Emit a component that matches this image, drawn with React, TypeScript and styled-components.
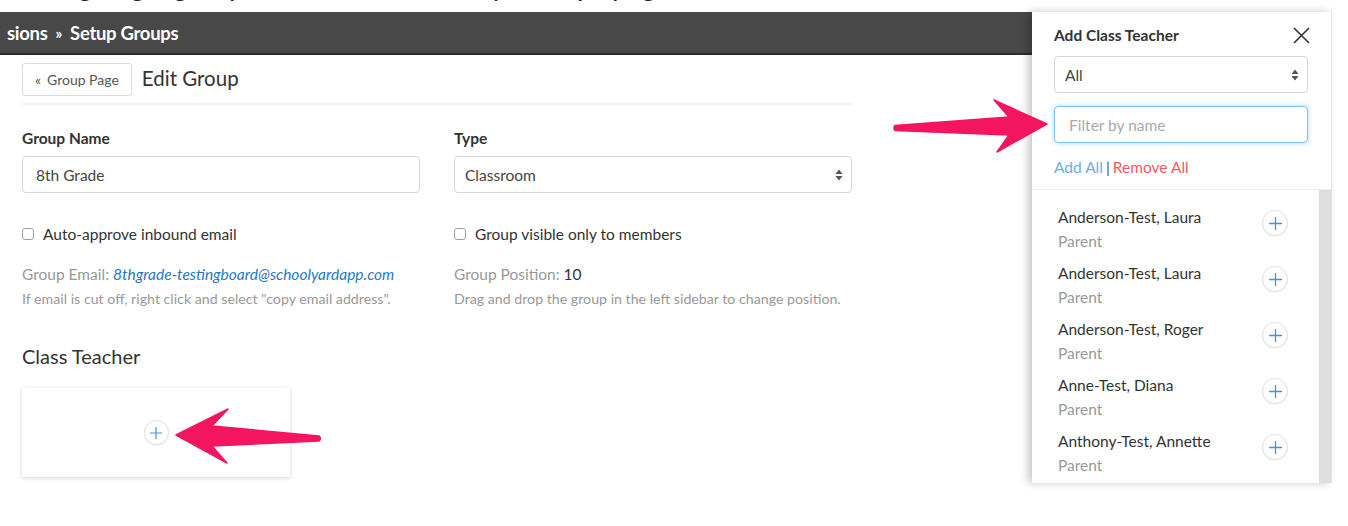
import * as React from "react";
import styled, { createGlobalStyle } from "styled-components";

const GlobalStyle = createGlobalStyle`
    html, body { margin: 0; padding: 0; background: #fff; }
    body { font-family: Lato, "Open Sans", "Liberation Sans", sans-serif; color: #333; }
    * { box-sizing: border-box; }
`;

interface Person {
    name: string,   // display name of the member
    role: string,   // role line shown under the name
};

const people: Person[] = [
    { name: "Anderson-Test, Laura", role: "Parent" },
    { name: "Anderson-Test, Laura", role: "Parent" },
    { name: "Anderson-Test, Roger", role: "Parent" },
    { name: "Anne-Test, Diana", role: "Parent" },
    { name: "Anthony-Test, Annette", role: "Parent" },
];

const Page = styled.div`
    position: relative;
    width: 1348px;
    height: 526px;
    overflow: hidden;
    background: #fff;
`;

// heading of the surrounding document, only its descenders are left in the crop
const Caption = styled.div`
    height: 12px;
    overflow: hidden;
    padding-left: 28px;
    font-size: 28px;
    color: #222;
    white-space: nowrap;
`;

const CaptionText = styled.div`
    line-height: 30px;
    margin-top: -30px;
`;

const Stage = styled.div`
    display: flex;
    align-items: flex-start;
    height: 514px;
`;

const Main = styled.div`
    width: 1032px;
    flex: none;
    display: flex;
    flex-direction: column;
`;

const TopBar = styled.div`
    height: 43px;
    background: #484848;
    border-bottom: 2px solid #2b2b2b;
    display: flex;
    align-items: center;
    padding-left: 7px;
    color: #fff;
    font-size: 18.5px;
    font-weight: 700;
    letter-spacing: -0.3px;
    white-space: nowrap;
`;

const Crumb = styled.span`
    color: #fff;
`;

const Sep = styled.span`
    margin: 0 8px;
    font-size: 15px;
`;

const Content = styled.div`
    width: 852px;
    padding: 8px 0 0 22px;
    display: flex;
    flex-direction: column;
`;

const TitleRow = styled.div`
    display: flex;
    align-items: center;
    gap: 10px;
    padding-bottom: 7px;
    border-bottom: 2px solid #f2f2f2;
`;

const BackButton = styled.button`
    height: 33px;
    padding: 0 12px;
    border: 1px solid #dcdcdc;
    border-radius: 3px;
    background: #fff;
    font-family: inherit;
    font-size: 14px;
    color: #555;
    display: flex;
    align-items: center;
    gap: 6px;
`;

const Title = styled.h1`
    margin: 0 0 3px;
    font-size: 20.5px;
    font-weight: 400;
    color: #333;
`;

const Columns = styled.div`
    display: grid;
    grid-template-columns: 398px 398px;
    column-gap: 34px;
    margin-top: 24px;
`;

const Field = styled.div`
    display: flex;
    flex-direction: column;
`;

const Label = styled.div`
    font-size: 15.5px;
    font-weight: 700;
    color: #333;
    height: 18px;
    line-height: 18px;
`;

const TextBox = styled.div<{ inset?: number }>`
    position: relative;
    margin-top: 9px;
    height: 37px;
    border: 1px solid #d6d6d6;
    border-radius: 4px;
    display: flex;
    align-items: center;
    padding: 0 14px 0 ${p => p.inset ?? 13}px;
    font-size: 15.5px;
    color: #444;
    background: #fff;
`;

const Spinner = styled.svg`
    position: absolute;
    right: 8px;
    top: 50%;
    margin-top: -6px;
`;

const CheckRow = styled.label`
    display: flex;
    align-items: center;
    gap: 9px;
    margin-top: 32px;
    font-size: 15.5px;
    color: #333;
`;

const Check = styled.span`
    width: 12px;
    height: 12px;
    border: 1px solid #9c9c9c;
    border-radius: 3px;
    background: #fff;
`;

const InfoLine = styled.div`
    margin-top: 22px;
    font-size: 15.5px;
    color: #999;
    line-height: 18px;
`;

const Strong = styled.span`
    color: #333;
`;

const EmailLink = styled.a`
    color: #2779c4;
    font-style: italic;
    text-decoration: none;
`;

const Hint = styled.div`
    margin-top: 7px;
    font-size: 14.2px;
    color: #999;
    line-height: 17px;
`;

const SectionTitle = styled.h2`
    margin: 37px 0 0;
    font-size: 20px;
    font-weight: 400;
    color: #333;
    line-height: 24px;
`;

const TeacherCard = styled.div`
    margin-top: 20px;
    width: 268px;
    height: 89px;
    background: #fff;
    box-shadow: 0 1px 4px rgba(0, 0, 0, 0.18);
    display: flex;
    align-items: center;
    justify-content: center;
`;

const PlusCircle = styled.span<{ size: number }>`
    width: ${p => p.size}px;
    height: ${p => p.size}px;
    border-radius: 50%;
    border: 1px solid #e0e0e0;
    box-shadow: 0 1px 1px rgba(0, 0, 0, 0.06);
    background: #fff;
    display: flex;
    align-items: center;
    justify-content: center;
    flex: none;
`;

const Panel = styled.div`
    width: 300px;
    height: 471px;
    flex: none;
    background: #fff;
    box-shadow: -4px 0 8px rgba(0, 0, 0, 0.22);
    border-right: 1px solid #e4e4e4;
    display: flex;
    flex-direction: column;
    position: relative;
    z-index: 1;
`;

const PanelHead = styled.div`
    padding: 11px 23px 0 22px;
    display: flex;
    flex-direction: column;
`;

const PanelTitleRow = styled.div`
    display: flex;
    align-items: center;
    justify-content: space-between;
    height: 24px;
`;

const PanelTitle = styled.div`
    font-size: 15.5px;
    font-weight: 700;
    color: #333;
`;

const CloseButton = styled.button`
    border: none;
    background: none;
    padding: 0;
    display: flex;
    margin-right: -2px;
`;

const FilterBox = styled.div`
    margin-top: 13px;
    height: 37px;
    border: 1px solid #83bff0;
    border-radius: 4px;
    box-shadow: 0 0 5px rgba(102, 175, 233, 0.55);
    display: flex;
    align-items: center;
    padding-left: 14px;
    font-size: 15.5px;
    color: #aaa;
`;

const BulkActions = styled.div`
    margin-top: 15px;
    height: 18px;
    font-size: 15.5px;
    color: #555;
    display: flex;
    gap: 3px;
    align-items: center;
`;

const ActionLink = styled.span<{ tone: "add" | "remove" }>`
    color: ${p => (p.tone === "add" ? "#6aaee6" : "#f45a62")};
`;

const ListArea = styled.div`
    margin-top: 13px;
    flex: 1;
    display: flex;
    border-top: 1px solid #eeeeee;
    min-height: 0;
`;

const List = styled.div`
    flex: 1;
    padding: 17px 0 0 26px;
    display: flex;
    flex-direction: column;
    gap: 12px;
    overflow: hidden;
`;

const Track = styled.div`
    width: 12px;
    background: #dedede;
`;

const Item = styled.div`
    display: flex;
    align-items: flex-start;
    justify-content: space-between;
    padding-right: 31px;
`;

const ItemText = styled.div`
    display: flex;
    flex-direction: column;
    gap: 4px;
    font-size: 15.5px;
    line-height: 20px;
`;

const ItemName = styled.span`
    color: #333;
`;

const ItemRole = styled.span`
    color: #999;
`;

const ItemAdd = styled(PlusCircle)`
    margin-top: 3px;
`;

const Overlay = styled.svg`
    position: absolute;
    left: 0;
    top: 0;
    pointer-events: none;
    z-index: 5;
`;

const Plus: React.FC<{ size: number }> = ({ size }) => (
    <svg width={size} height={size} viewBox="0 0 14 14">
        <path d="M7 1v12M1 7h12" stroke="#4a8fd6" strokeWidth="1.2" fill="none"/>
    </svg>
);

const UpDown: React.FC = () => (
    <Spinner width="8" height="12" viewBox="0 0 8 12">
        <path d="M4 0.5L7.5 5H0.5z M4 11.5L0.5 7h7z" fill="#555"/>
    </Spinner>
);

const App: React.FC = () => {
    return (
        <Page>
            <GlobalStyle/>
            <Caption>
                <CaptionText>Assigning a group teacher on the Setup Groups page</CaptionText>
            </Caption>
            <Stage>
                <Main>
                    <TopBar>
                        <Crumb>sions</Crumb>
                        <Sep>»</Sep>
                        <Crumb>Setup Groups</Crumb>
                    </TopBar>
                    <Content>
                        <TitleRow>
                            <BackButton><span>«</span>Group Page</BackButton>
                            <Title>Edit Group</Title>
                        </TitleRow>
                        <Columns>
                            <Field>
                                <Label>Group Name</Label>
                                <TextBox>8th Grade</TextBox>
                                <CheckRow><Check/>Auto-approve inbound email</CheckRow>
                                <InfoLine>
                                    Group Email: <EmailLink>8thgrade-testingboard@schoolyardapp.com</EmailLink>
                                </InfoLine>
                                <Hint>If email is cut off, right click and select "copy email address".</Hint>
                            </Field>
                            <Field>
                                <Label>Type</Label>
                                <TextBox inset={10}>Classroom<UpDown/></TextBox>
                                <CheckRow><Check/>Group visible only to members</CheckRow>
                                <InfoLine>Group Position: <Strong>10</Strong></InfoLine>
                                <Hint>Drag and drop the group in the left sidebar to change position.</Hint>
                            </Field>
                        </Columns>
                        <SectionTitle>Class Teacher</SectionTitle>
                        <TeacherCard>
                            <PlusCircle size={25}><Plus size={14}/></PlusCircle>
                        </TeacherCard>
                    </Content>
                </Main>
                <Panel>
                    <PanelHead>
                        <PanelTitleRow>
                            <PanelTitle>Add Class Teacher</PanelTitle>
                            <CloseButton aria-label="close">
                                <svg width="17" height="17" viewBox="0 0 17 17">
                                    <path d="M1 1L16 16M16 1L1 16" stroke="#333" strokeWidth="1.6"/>
                                </svg>
                            </CloseButton>
                        </PanelTitleRow>
                        <TextBox inset={10}>All<UpDown/></TextBox>
                        <FilterBox>Filter by name</FilterBox>
                        <BulkActions>
                            <ActionLink tone="add">Add All</ActionLink>|<ActionLink tone="remove">Remove All</ActionLink>
                        </BulkActions>
                    </PanelHead>
                    <ListArea>
                        <List>
                            {people.map((p, i) => (
                                <Item key={i}>
                                    <ItemText>
                                        <ItemName>{p.name}</ItemName>
                                        <ItemRole>{p.role}</ItemRole>
                                    </ItemText>
                                    <ItemAdd size={26}><Plus size={15}/></ItemAdd>
                                </Item>
                            ))}
                        </List>
                        <Track/>
                    </ListArea>
                </Panel>
            </Stage>
            <Overlay width="1348" height="526" viewBox="0 0 1348 526">
                {/* annotation arrows */}
                <path d="M895,125.5 Q893,128 895,130.5 L1009,135 L997,152 L1047,124 L994,100 L1009,117 Z" fill="#f3155f" strokeLinejoin="round" stroke="#f3155f" strokeWidth="1.5"/>
                <path d="M319,436 Q322,438.5 319,441 L212,446 L227,463 L176,435 L228,409 L212,426 Z" fill="#f3155f" strokeLinejoin="round" stroke="#f3155f" strokeWidth="1.5"/>
            </Overlay>
        </Page>
    );
};

export default App;
